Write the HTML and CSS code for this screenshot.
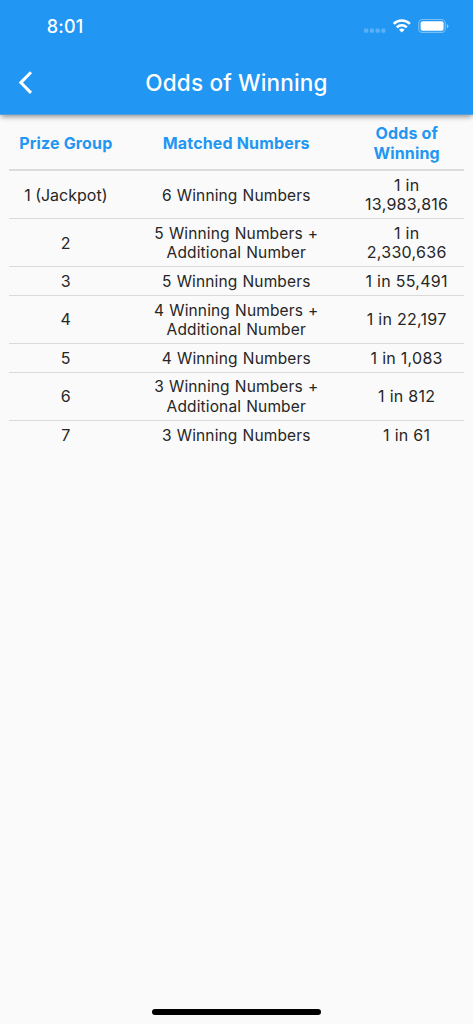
FILE: index.html
```html
<!DOCTYPE html>
<html lang="en">
<head>
<meta charset="utf-8">
<title>Odds of Winning</title>
<link rel="stylesheet" href="styles.css">
</head>
<body>
<div class="screen">
  <header class="app-bar">
    <div class="status">
      <span class="time">8:01</span>
      <svg class="status-icons" width="90" height="20" viewBox="0 0 90 20" fill="#fff">
        <g opacity=".25"><rect x="4" y="12.6" width="4.3" height="4.2" rx="1.4"/><rect x="9.8" y="12.6" width="4.3" height="4.2" rx="1.4"/><rect x="15.5" y="12.6" width="4.3" height="4.2" rx="1.4"/><rect x="21.2" y="12.6" width="4.3" height="4.2" rx="1.4"/></g>
        <g fill="none" stroke="#fff" stroke-width="2.5"><path d="M33.7 7.8a11.7 11.7 0 0 1 16.2 0"/><path d="M36.8 11.3a7.2 7.2 0 0 1 10 0"/></g>
        <path d="M39 13.7a4.1 4.1 0 0 1 5.6 0l-2.8 2.9z"/>
        <rect x="58.8" y="3.5" width="26.4" height="12.9" rx="3.7" fill="none" stroke="#fff" stroke-opacity=".4" stroke-width="1.1"/>
        <rect x="60.6" y="5.2" width="23" height="9.6" rx="2"/>
        <path d="M86.8 8v4.4q1.6-.7 1.6-2.2t-1.6-2.2z" opacity=".5"/>
      </svg>
    </div>
    <div class="toolbar">
      <svg class="back" width="16" height="26" viewBox="0 0 16 26" fill="none" stroke="#fff" stroke-width="3"><path d="M13 2.3 2.8 12.6 13 22.9"/></svg>
      <h1 class="title">Odds of Winning</h1>
    </div>
  </header>
  <main class="table">
    <div class="row head"><span>Prize Group</span><span>Matched Numbers</span><span>Odds of<br>Winning</span></div>
    <div class="row double"><span class="group">1 (Jackpot)</span><span class="match">6 Winning Numbers</span><span>1 in<br>13,983,816</span></div>
    <div class="row double"><span>2</span><span class="match">5 Winning Numbers +<br>Additional Number</span><span>1 in<br>2,330,636</span></div>
    <div class="row"><span>3</span><span class="match">5 Winning Numbers</span><span>1 in 55,491</span></div>
    <div class="row double"><span>4</span><span class="match">4 Winning Numbers +<br>Additional Number</span><span>1 in 22,197</span></div>
    <div class="row"><span>5</span><span class="match">4 Winning Numbers</span><span>1 in 1,083</span></div>
    <div class="row double"><span>6</span><span class="match">3 Winning Numbers +<br>Additional Number</span><span>1 in 812</span></div>
    <div class="row"><span>7</span><span class="match">3 Winning Numbers</span><span>1 in 61</span></div>
  </main>
  <div class="home"></div>
</div>
</body>
</html>
```

FILE: styles.css
```css
body { margin: 0; background: #fafafa; font-family: Inter, "Liberation Sans", sans-serif; }
.screen { height: 1024px; display: flex; flex-direction: column; overflow: hidden; }
.app-bar { box-sizing: border-box; height: 115px; background: #2196f3; border-bottom: 1px solid #559fdd; color: #fff; box-shadow: 0 3px 5px -1px rgba(0,0,0,.4); }
.status { height: 52px; display: flex; justify-content: space-between; align-items: center; padding: 0 24px 0 46.8px; }
.time { font-size: 18px; font-weight: 500; letter-spacing: .2px; }
.status-icons { margin-right: -1px; }
.toolbar { height: 61px; display: grid; grid-template-columns: 60px 1fr 60px; align-items: center; }
.back { margin-left: 18px; }
.title { margin: 0; text-align: center; font-size: 22.5px; line-height: 28px; padding-top: 1px; font-weight: 500; letter-spacing: .17px; white-space: nowrap; }
.table { flex: 1; padding: 4px 9.5px 0 9px; color: #262626; font-size: 16px; line-height: 19.3px; letter-spacing: .28px; }
.row { display: grid; grid-template-columns: 1fr 2fr 1fr; align-items: center; text-align: center; white-space: nowrap; box-sizing: border-box; height: 28.7px; padding-top: 1px; border-bottom: 1px solid #dadada; }
.double { height: 47.95px; }
.group { letter-spacing: 0; }
.match { font-size: 15.5px; letter-spacing: .14px; word-spacing: .6px; }
.row:last-child { border-bottom: 0; }
.head { height: 52.4px; padding: 0 0 1px; border-bottom: 2px solid #dcdcdc; color: #2196f3; font-weight: 700; letter-spacing: .16px; }
.home { width: 169px; height: 6px; border-radius: 3px; background: #000; margin: 0 auto 9.5px; }
```
